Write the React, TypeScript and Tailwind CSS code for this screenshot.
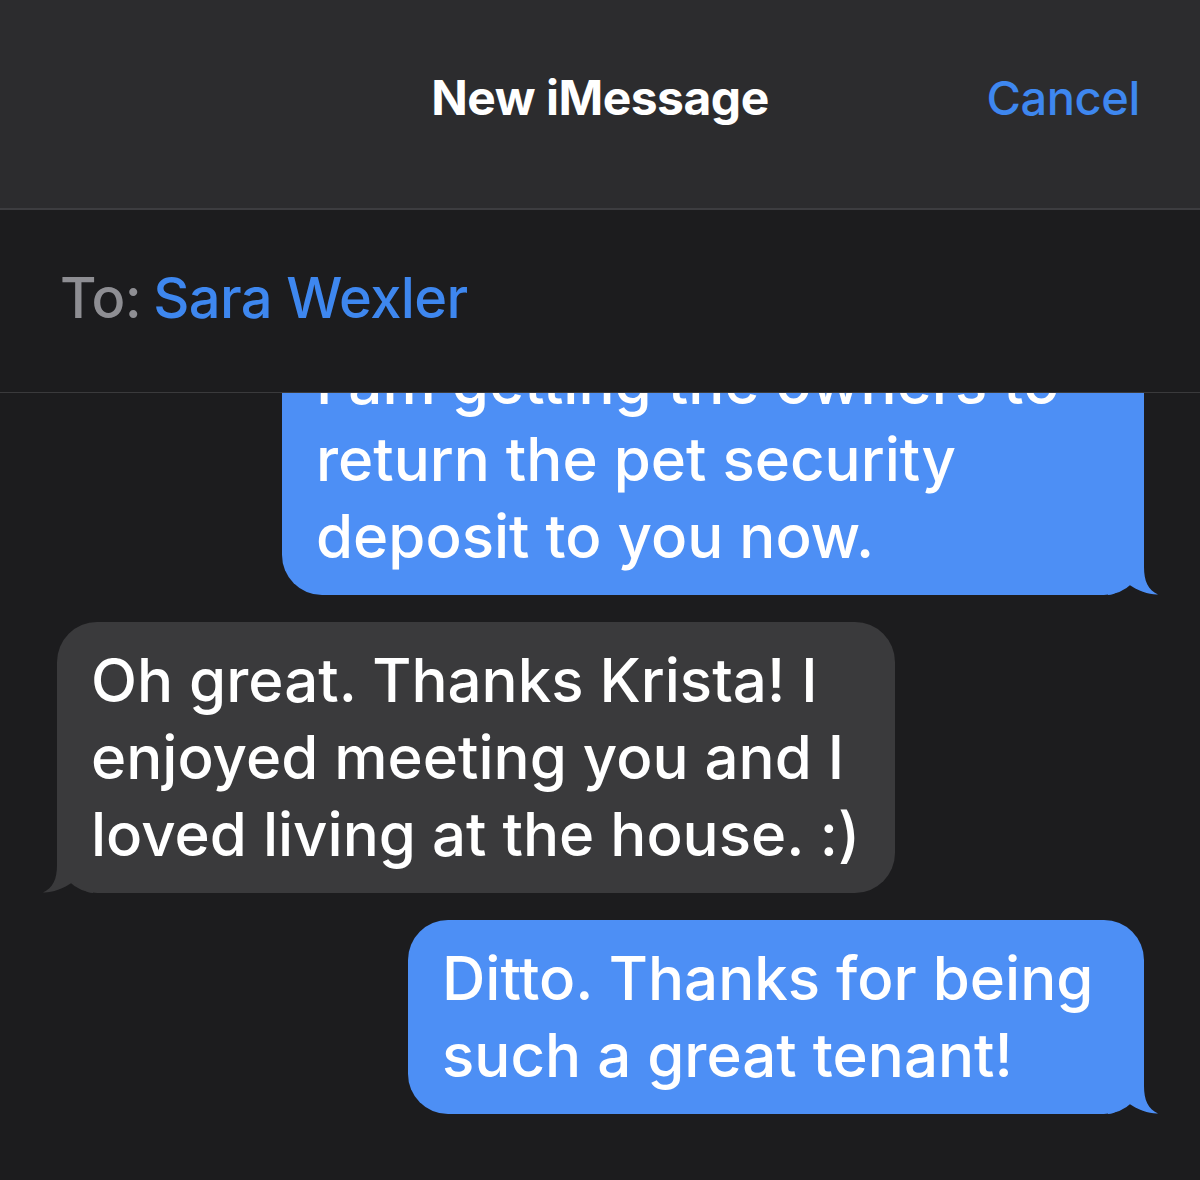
const font = { fontFamily: "Inter, 'Noto Sans', sans-serif" };

type Msg = { from: "me" | "them"; lines: string[]; width: number };

const messages: Msg[] = [
  {
    from: "me",
    lines: ["I am getting the owners to", "return the pet security", "deposit to you now."],
    width: 862,
  },
  {
    from: "them",
    lines: ["Oh great. Thanks Krista! I", "enjoyed meeting you and I", "loved living at the house. :)"],
    width: 838,
  },
  {
    from: "me",
    lines: ["Ditto. Thanks for being", "such a great tenant!"],
    width: 736,
  },
];

function Tail({ side, color }: { side: "left" | "right"; color: string }) {
  const pos = side === "right" ? "-right-[14px]" : "-left-[14px] -scale-x-100";
  return (
    <svg
      className={`absolute bottom-0 ${pos} w-[50px] h-[50px]`}
      viewBox="0 0 50 50"
      aria-hidden
    >
      <path
        d="M0 0 H36 V22 C36 36 40 45 50 49.5 C42 50 30 46 20 39 C13 45 6 50 0 50 Z"
        fill={color}
      />
    </svg>
  );
}

function Bubble({ msg, first }: { msg: Msg; first?: boolean }) {
  const mine = msg.from === "me";
  const color = mine ? "#4d8ff5" : "#3a3a3c";
  return (
    <div className={`flex ${mine ? "justify-end pr-[56px]" : "justify-start pl-[57px]"} ${first ? "-mt-[69px]" : ""}`}>
      <div
        className={`relative rounded-[40px] px-[34px] py-[20px] text-white font-medium text-[60px] leading-[77px] tracking-normal ${mine ? "bg-[#4d8ff5]" : "bg-[#3a3a3c]"}`}
        style={{ width: msg.width }}
      >
        {msg.lines.map((l, i) => (
          <div key={i} className="relative z-10 whitespace-nowrap">
            {l}
          </div>
        ))}
        <Tail side={mine ? "right" : "left"} color={color} />
      </div>
    </div>
  );
}

export default function App() {
  return (
    <div className="w-[1200px] h-[1180px] bg-[#1c1c1e] flex flex-col overflow-hidden" style={font}>
      <div className="h-[208px] bg-[#2c2c2e] grid grid-cols-[1fr_auto_1fr] items-start pt-[74px] px-[60px]">
        <div />
        <div className="text-white font-bold text-[48px] leading-none tracking-[-0.5px]">New iMessage</div>
        <div className="justify-self-end text-[#3e87ef] font-medium text-[47px] leading-none tracking-[-0.4px]">Cancel</div>
      </div>
      <div className="h-[2px] bg-[#3d3d40]" />
      <div className="relative z-20 h-[182px] bg-[#1c1c1e] flex items-center pl-[60px] pb-[6px] font-medium text-[56px] leading-none tracking-[-0.6px]">
        <span className="text-[#8e8e93]">To:</span>
        <span className="ml-[12px] text-[#3e87ef]">Sara Wexler</span>
      </div>
      <div className="relative z-20 h-px bg-[#3a3a3c]" />
      <div className="flex-1 overflow-hidden flex flex-col gap-[27px]">
        {messages.map((m, i) => (
          <Bubble key={i} msg={m} first={i === 0} />
        ))}
      </div>
    </div>
  );
}
